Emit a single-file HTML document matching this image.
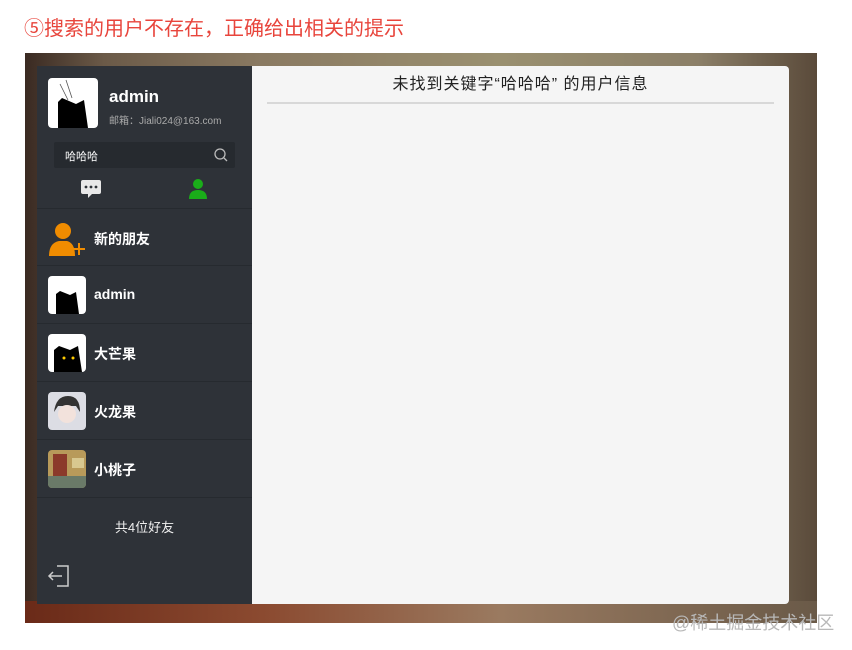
<!DOCTYPE html>
<html><head><meta charset="utf-8"><style>
*{margin:0;padding:0;box-sizing:border-box}
body{width:852px;height:650px;background:#fff;position:relative;overflow:hidden;font-family:"Liberation Sans","Noto Sans CJK SC",sans-serif}
.title{position:absolute;left:24px;top:12px;font-size:20px;color:#e8453c;letter-spacing:0}
.bg{position:absolute;left:25px;top:53px;width:792px;height:570px;background:linear-gradient(90deg,#3a2a22 0%,#6b5a48 10%,#8a7a62 30%,#9a9070 60%,#8b7f68 85%,#5a4a3a 100%)}
.bg:after{content:"";position:absolute;left:0;right:0;bottom:0;height:22px;background:linear-gradient(90deg,#6a2a18,#8b4a30 30%,#9a7a60 60%,#6a5a48)}
.side{position:absolute;left:37px;top:66px;width:215px;height:538px;background:#2e3238;color:#fff}
.main{position:absolute;left:252px;top:66px;width:537px;height:538px;background:#f5f5f5;border-radius:0 4px 4px 0}
.main .h{position:absolute;left:15px;right:15px;top:0;height:38px;border-bottom:2px solid #d8d8d8;text-align:center;line-height:38px;font-size:16px;letter-spacing:1px;color:#222}
.av{position:absolute;background:#fff;border-radius:4px;overflow:hidden}
.name{position:absolute;font-weight:bold;font-size:14px}
.row{position:absolute;left:0;width:215px;height:58px;border-bottom:1px solid #262a2f}
</style></head><body>
<div class="title">⑤搜索的用户不存在，正确给出相关的提示</div>
<div class="bg"></div>
<div class="side">
 <div class="av" style="left:11px;top:12px;width:50px;height:50px"><svg width="50" height="50"><path d="M10 50 L10 24 L14 20 L28 26 L36 22 L40 50Z" fill="#000"/><path d="M18 2 L24 20 M12 6 L20 22" stroke="#555" stroke-width=".8"/></svg></div>
 <div class="name" style="left:72px;top:21px;font-size:17px">admin</div>
 <div style="position:absolute;left:72px;top:46px;font-size:10px;color:#aaa">邮箱：Jiali024@163.com</div>
 <div style="position:absolute;left:17px;top:76px;width:181px;height:26px;background:#262a2f;border-radius:2px"><span style="position:absolute;left:11px;top:6px;font-size:11px">哈哈哈</span>
 <svg style="position:absolute;right:6px;top:5px" width="16" height="16"><circle cx="7" cy="7" r="5" fill="none" stroke="#bbb" stroke-width="1.3"/><path d="M11 11 L14 14" stroke="#bbb" stroke-width="1.3"/></svg></div>
 <svg style="position:absolute;left:43px;top:113px" width="22" height="20"><path d="M3 1 H19 Q21 1 21 3 V13 Q21 15 19 15 H12 L8 19 L8 15 H3 Q1 15 1 13 V3 Q1 1 3 1Z" fill="#e8e8e8"/><circle cx="6" cy="8" r="1.4" fill="#2e3238"/><circle cx="11" cy="8" r="1.4" fill="#2e3238"/><circle cx="16" cy="8" r="1.4" fill="#2e3238"/></svg>
 <svg style="position:absolute;left:151px;top:112px" width="20" height="22"><circle cx="10" cy="6" r="5" fill="#1aad19"/><path d="M1 21 Q1 12 10 12 Q19 12 19 21Z" fill="#1aad19"/></svg>
 <div class="row" style="top:142px;border-top:1px solid #262a2f"><svg style="position:absolute;left:12px;top:12px" width="36" height="36"><circle cx="14" cy="10" r="8" fill="#f08c00"/><path d="M0 35 Q0 22 10 20 L18 20 Q26 22 26 35Z" fill="#f08c00"/><path d="M30 22 V34 M24 28 H36" stroke="#f08c00" stroke-width="2"/></svg><div class="name" style="left:57px;top:20px">新的朋友</div></div>
 <div class="row" style="top:200px"><div class="av" style="left:11px;top:10px;width:38px;height:38px"><svg width="38" height="38"><path d="M8 38 V18 L12 15 L22 19 L28 16 L31 38Z" fill="#000"/></svg></div><div class="name" style="left:57px;top:20px">admin</div></div>
 <div class="row" style="top:258px"><div class="av" style="left:11px;top:10px;width:38px;height:38px"><svg width="38" height="38"><path d="M6 38 V16 L11 12 L22 16 L30 12 L34 38Z" fill="#000"/><circle cx="16" cy="24" r="1.5" fill="#fc0"/><circle cx="25" cy="24" r="1.5" fill="#fc0"/></svg></div><div class="name" style="left:57px;top:20px">大芒果</div></div>
 <div class="row" style="top:316px"><div class="av" style="left:11px;top:10px;width:38px;height:38px;background:#dcdde4"><svg width="38" height="38"><path d="M6 20 Q8 4 20 4 Q32 4 32 20 L28 14 L10 14Z" fill="#333"/><ellipse cx="19" cy="22" rx="9" ry="9" fill="#f2e2dc"/></svg></div><div class="name" style="left:57px;top:20px">火龙果</div></div>
 <div class="row" style="top:374px"><div class="av" style="left:11px;top:10px;width:38px;height:38px;background:#b89a5a"><svg width="38" height="38"><rect x="5" y="4" width="14" height="22" fill="#8b3a2a"/><rect x="0" y="26" width="38" height="12" fill="#6a7a68"/><rect x="24" y="8" width="12" height="10" fill="#d8c890"/></svg></div><div class="name" style="left:57px;top:20px">小桃子</div></div>
 <div style="position:absolute;left:0;width:215px;top:451px;text-align:center;font-size:13px;color:#eee">共4位好友</div>
 <svg style="position:absolute;left:10px;top:498px" width="24" height="24"><path d="M10 2 H21 V22 H10" fill="none" stroke="#ccc" stroke-width="1.5"/><path d="M2 12 H15 M6 8 L2 12 L6 16" fill="none" stroke="#ccc" stroke-width="1.5"/></svg>
</div>
<div class="main"><div class="h">未找到关键字“哈哈哈” 的用户信息</div></div>
<div style="position:absolute;left:672px;top:609px;font-size:18px;color:#b8b8b8">@稀土掘金技术社区</div>
</body></html>
